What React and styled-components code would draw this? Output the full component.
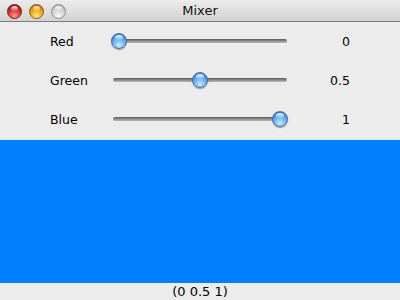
import React from "react";
import styled, { createGlobalStyle } from "styled-components";

const Global = createGlobalStyle`
  html, body { margin: 0; padding: 0; background: #ececec; }
  body { font-family: "DejaVu Sans", "Liberation Sans", sans-serif; }
`;

const Window = styled.div`
  width: 400px;
  height: 300px;
  display: flex;
  flex-direction: column;
  background: #ececec;
  overflow: hidden;
`;

const TitleBar = styled.div`
  height: 21px;
  flex: none;
  display: flex;
  align-items: center;
  position: relative;
  background: linear-gradient(#ececec, #d2d2d2);
  border-bottom: 1px solid #7c7c7c;
  border-radius: 4px 4px 0 0;
`;

const Lights = styled.div`
  display: flex;
  gap: 7px;
  padding-left: 7px;
  margin-top: 1px;
`;

const Light = styled.div`
  position: relative;
  width: 15px;
  height: 15px;
  border-radius: 50%;
  box-sizing: border-box;
  border: 1px solid ${(p) => p.$edge};
  background: radial-gradient(circle at 50% 85%, ${(p) => p.$glow} 0%, ${(p) => p.$base} 55%, ${(p) => p.$dark} 100%);
  &::after {
    content: "";
    position: absolute;
    left: 3px;
    top: 1px;
    width: 7px;
    height: 5px;
    border-radius: 50%;
    background: linear-gradient(rgba(255,255,255,0.9), rgba(255,255,255,0.1));
  }
`;

const Title = styled.div`
  position: absolute;
  left: 0;
  right: 0;
  text-align: center;
  font-size: 13px;
  color: #111;
  pointer-events: none;
`;

const Controls = styled.div`
  flex: none;
  display: flex;
  flex-direction: column;
`;

const Row = styled.div`
  height: 39px;
  display: grid;
  grid-template-columns: 61px 177px 1fr;
  align-items: center;
  padding-left: 50px;
  padding-right: 50px;
`;

const Label = styled.div`
  font-size: 12.5px;
  color: #000;
  margin-top: -1px;
`;

const Value = styled.div`
  font-size: 12.5px;
  color: #000;
  text-align: right;
  margin-top: -1px;
`;

const Slider = styled.div`
  position: relative;
  height: 16px;
  margin-top: -2px;
`;

const Track = styled.div`
  position: absolute;
  left: 2px;
  right: 1px;
  top: 6px;
  height: 4px;
  border-radius: 2px;
  background: linear-gradient(#5a5a5a, #959595 60%, #b8b8b8);
`;

const Knob = styled.div`
  position: absolute;
  top: 0;
  width: 16px;
  height: 16px;
  border-radius: 50%;
  box-sizing: border-box;
  border: 1px solid #3f6fa8;
  background: radial-gradient(circle at 50% 80%, #c6ecff 0%, #6fb3f0 45%, #2f7fd6 80%, #24609f 100%);
  box-shadow: 0 1px 1px rgba(0,0,0,0.35);
  &::after {
    content: "";
    position: absolute;
    left: 3px;
    top: 1px;
    width: 8px;
    height: 5px;
    border-radius: 50%;
    background: linear-gradient(rgba(255,255,255,0.95), rgba(255,255,255,0.15));
  }
`;

const Swatch = styled.div`
  flex: 1;
  border-top: 1px solid #c8f4ff;
  background: ${(p) => p.$color};
`;

const Footer = styled.div`
  height: 17px;
  flex: none;
  text-align: center;
  font-size: 13px;
  line-height: 17px;
  color: #000;
`;

const channels = [
  { name: "Red", value: 0 },
  { name: "Green", value: 0.5 },
  { name: "Blue", value: 1 },
];

const TRAVEL = 177 - 16;

export default function App() {
  const [r, g, b] = channels.map((c) => c.value);
  const color = `rgb(${Math.round(r * 255)}, ${Math.round(g * 255)}, ${Math.round(b * 255)})`;
  return (
    <>
      <Global />
      <Window>
        <TitleBar>
          <Lights>
            <Light $base="#d42a2a" $glow="#ff9a8c" $dark="#7a0808" $edge="#6e1c1c" />
            <Light $base="#f09a10" $glow="#ffee80" $dark="#a05800" $edge="#8a5a10" />
            <Light $base="#cfcfcf" $glow="#f8f8f8" $dark="#9c9c9c" $edge="#8e8e8e" />
          </Lights>
          <Title>Mixer</Title>
        </TitleBar>
        <Controls>
          {channels.map((c) => (
            <Row key={c.name}>
              <Label>{c.name}</Label>
              <Slider>
                <Track />
                <Knob style={{ left: `${c.value * TRAVEL}px` }} />
              </Slider>
              <Value>{c.value}</Value>
            </Row>
          ))}
        </Controls>
        <Swatch $color={color} />
        <Footer>({r} {g} {b})</Footer>
      </Window>
    </>
  );
}
